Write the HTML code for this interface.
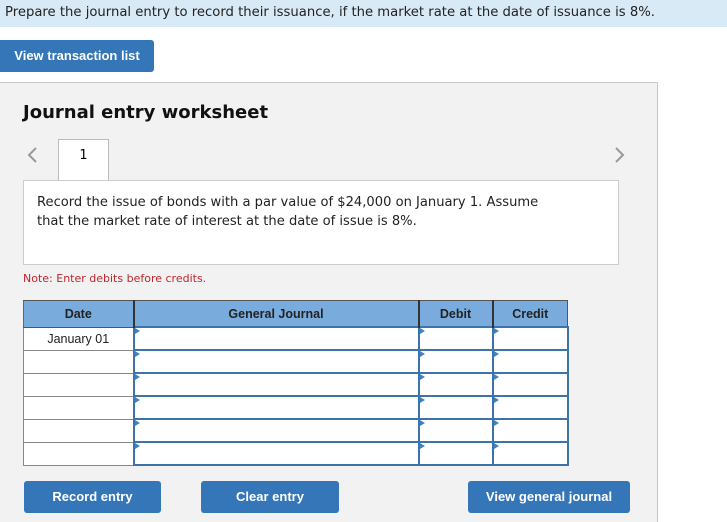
<!DOCTYPE html>
<html><head><style>
body{margin:0;width:727px;height:517px;overflow:hidden;background:#fff;font-family:"DejaVu Sans","Liberation Sans",sans-serif;position:relative}
.top{position:absolute;left:0;top:0;width:727px;height:27px;background:#d9eaf7;font-size:13.2px;line-height:25px;padding-left:5px;box-sizing:border-box;color:#222;white-space:nowrap}
.btn{position:absolute;background:#3476b8;color:#fff;font-family:"Liberation Sans",sans-serif;font-weight:bold;font-size:13px;text-align:center;border-radius:3px;box-sizing:border-box}
.panel{position:absolute;left:0;top:82px;width:658px;height:440px;background:#f2f2f2;border-top:1px solid #c8c8c8;border-right:1px solid #c8c8c8;box-sizing:border-box}
h1{position:absolute;left:23px;top:102px;margin:0;font-size:18px;font-weight:bold;color:#111}
.tab{position:absolute;left:58px;top:139px;width:51px;height:42px;background:#fff;border:1px solid #bbb;border-bottom:none;text-align:center;font-size:13px;line-height:32px;box-sizing:border-box}
.box{position:absolute;left:23px;top:180px;width:596px;height:85px;background:#fff;border:1px solid #ccc;box-sizing:border-box;padding:12px 50px 13px 13px;font-size:13.1px;line-height:19px;color:#222}
.note{position:absolute;left:23px;top:272px;font-size:11px;color:#c0272d}
table{position:absolute;left:23px;top:300px;border-collapse:collapse;font-family:"Liberation Sans",sans-serif;font-size:12.5px;table-layout:fixed;width:544px}
th{background:#79acdd;height:23px;border:1px solid #555;border-left:2px solid #333;font-weight:bold;color:#222}
td{height:21px;border:1px solid #888;background:#fff;padding:0;position:relative}
td.i{border:2px solid #3d73a8;}
td.i:before{content:"";position:absolute;left:0;top:0;border-left:5px solid #3d82c4;border-top:3px solid transparent;border-bottom:3px solid transparent}
svg.arr{position:absolute}
</style></head><body>
<div class="top">Prepare the journal entry to record their issuance, if the market rate at the date of issuance is 8%.</div>
<div class="btn" style="left:0;top:40px;width:154px;height:32px;line-height:32px;border-radius:0 3px 3px 0">View transaction list</div>
<div class="panel"></div>
<h1>Journal entry worksheet</h1>
<svg class="arr" style="left:26px;top:146px" width="12" height="18"><path d="M10 2 L3 9 L10 16" fill="none" stroke="#999" stroke-width="2"/></svg>
<svg class="arr" style="left:614px;top:146px" width="12" height="18"><path d="M2 2 L9 9 L2 16" fill="none" stroke="#999" stroke-width="2"/></svg>
<div class="tab">1</div>
<div class="box">Record the issue of bonds with a par value of $24,000 on January 1. Assume<br>that the market rate of interest at the date of issue is 8%.</div>
<div class="note">Note: Enter debits before credits.</div>
<table>
<colgroup><col style="width:110px"><col style="width:285px"><col style="width:74px"><col style="width:75px"></colgroup>
<tr><th style="border-left:1px solid #666">Date</th><th>General Journal</th><th>Debit</th><th>Credit</th></tr>
<tr><td style="text-align:center;color:#222">January 01</td><td class="i"></td><td class="i"></td><td class="i"></td></tr>
<tr><td></td><td class="i"></td><td class="i"></td><td class="i"></td></tr>
<tr><td></td><td class="i"></td><td class="i"></td><td class="i"></td></tr>
<tr><td></td><td class="i"></td><td class="i"></td><td class="i"></td></tr>
<tr><td></td><td class="i"></td><td class="i"></td><td class="i"></td></tr>
<tr><td></td><td class="i"></td><td class="i"></td><td class="i"></td></tr>
</table>
<div class="btn" style="left:24px;top:481px;width:137px;height:32px;line-height:31px">Record entry</div>
<div class="btn" style="left:201px;top:481px;width:138px;height:32px;line-height:31px">Clear entry</div>
<div class="btn" style="left:468px;top:481px;width:162px;height:32px;line-height:31px">View general journal</div>
</body></html>
